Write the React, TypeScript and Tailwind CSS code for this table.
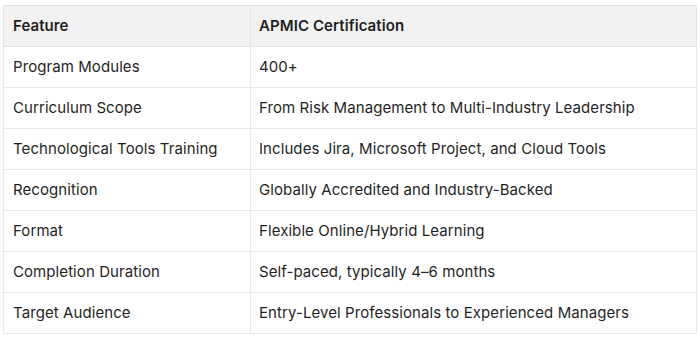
const rows: [string, string][] = [
  ['Program Modules', '400+'],
  ['Curriculum Scope', 'From Risk Management to Multi-Industry Leadership'],
  ['Technological Tools Training', 'Includes Jira, Microsoft Project, and Cloud Tools'],
  ['Recognition', 'Globally Accredited and Industry-Backed'],
  ['Format', 'Flexible Online/Hybrid Learning'],
  ['Completion Duration', 'Self-paced, typically 4–6 months'],
  ['Target Audience', 'Entry-Level Professionals to Experienced Managers'],
];

export default function App() {
  return (
    <div className="w-[700px] h-[339px] bg-white pt-[5px] pl-[3px] font-['Inter',sans-serif] text-[15px] tracking-[0.08px] text-[#1f1f1f]">
      <table className="w-[694px] border-collapse border border-[#e3e3e3] table-fixed">
        <colgroup>
          <col className="w-[247px]" />
          <col />
        </colgroup>
        <thead>
          <tr className="bg-[#f2f2f2] h-[41px]">
            <th className="text-left font-semibold px-[9px] border border-[#e3e3e3]">Feature</th>
            <th className="text-left font-semibold px-[8px] border border-[#e3e3e3]">APMIC Certification</th>
          </tr>
        </thead>
        <tbody>
          {rows.map(([a, b]) => (
            <tr key={a} className="h-[41px]">
              <td className="px-[9px] pt-px border border-[#e9e9e9]">{a}</td>
              <td className="px-[8px] pt-px border border-[#e9e9e9]">{b}</td>
            </tr>
          ))}
        </tbody>
      </table>
    </div>
  );
}
